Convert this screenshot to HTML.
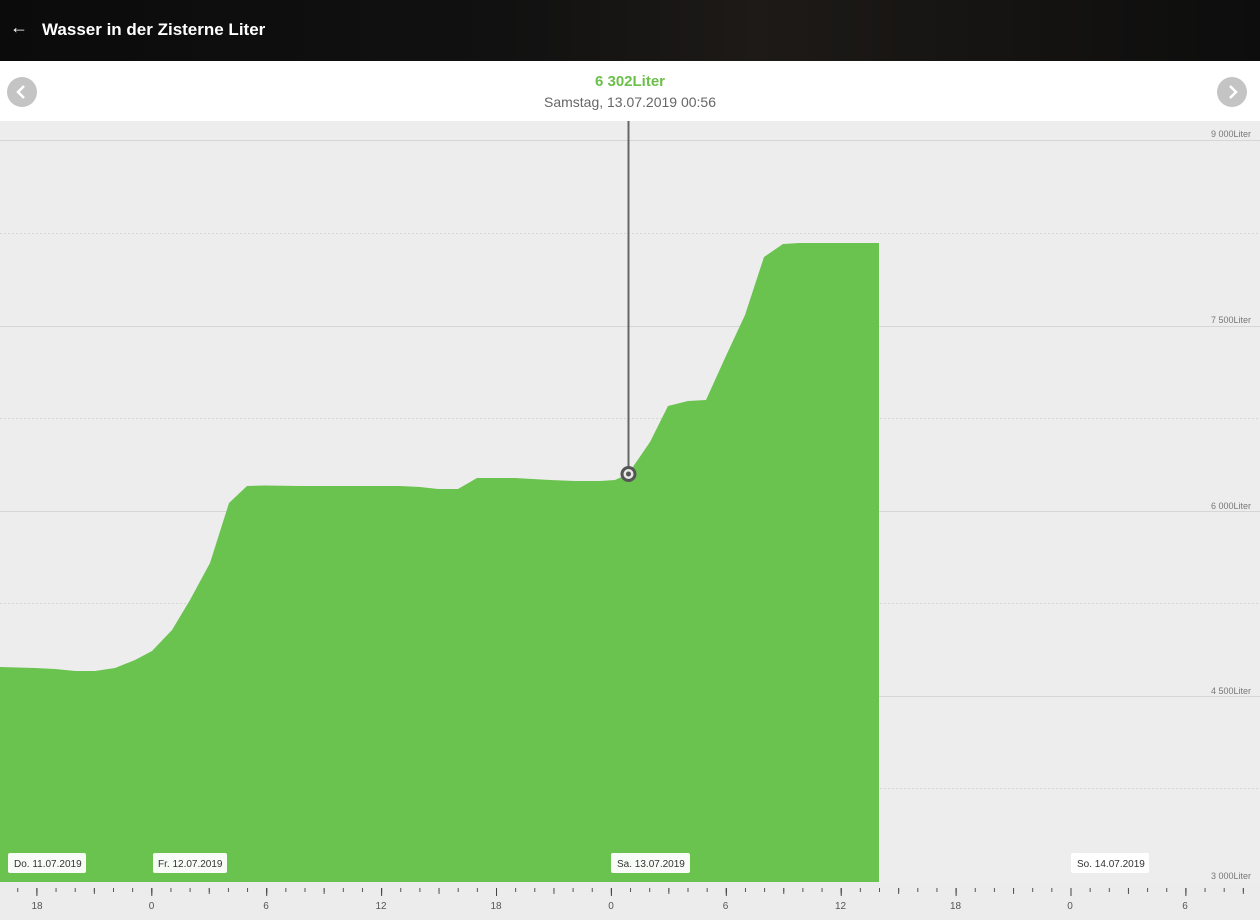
<!DOCTYPE html>
<html><head><meta charset="utf-8"><style>
html,body{margin:0;padding:0;width:1260px;height:920px;overflow:hidden;background:#ededed;font-family:"Liberation Sans",sans-serif}
.hdr{position:absolute;left:0;top:0;width:1260px;height:61px;background:linear-gradient(90deg,#0b0b0b 0%,#111 40%,#1d1a17 60%,#0d0d0d 100%)}
.hdr .t{position:absolute;left:42px;top:20px;color:#fff;font-weight:bold;font-size:17px}
.hdr .a{position:absolute;left:10px;top:17px;color:#fff;font-size:18px}
.top{position:absolute;left:0;top:61px;width:1260px;height:60px;background:#fff}
.btn{position:absolute;top:16px;width:30px;height:30px;border-radius:50%;background:#c4c4c4}
.v{position:absolute;left:0;width:1260px;text-align:center;top:12px;color:#6cc04a;font-weight:bold;font-size:15px}
.d{position:absolute;left:0;width:1260px;text-align:center;top:33px;color:#666;font-size:14px}
</style></head><body>
<div class="hdr"><div class="a">&#8592;</div><div class="t">Wasser in der Zisterne Liter</div></div>
<div class="top">
<div class="btn" style="left:7px"><svg width="30" height="30"><path d="M17 9 L11 15 L17 21" stroke="#fff" stroke-width="2.5" fill="none"/></svg></div>
<div class="btn" style="left:1217px"><svg width="30" height="30"><path d="M13 9 L19 15 L13 21" stroke="#fff" stroke-width="2.5" fill="none"/></svg></div>
<div class="v">6 302Liter</div>
<div class="d">Samstag, 13.07.2019 00:56</div>
</div>
<svg style="position:absolute;left:0;top:0" width="1260" height="920" font-family="Liberation Sans, sans-serif">
<defs>
<pattern id="p1" x="151.3" y="0" width="19.15" height="920" patternUnits="userSpaceOnUse"><rect x="0" y="888" width="1" height="4" fill="#555"/></pattern>
<pattern id="p3" x="151.3" y="0" width="57.45" height="920" patternUnits="userSpaceOnUse"><rect x="0" y="888" width="1" height="6" fill="#555"/></pattern>
<pattern id="p6" x="151.3" y="0" width="114.9" height="920" patternUnits="userSpaceOnUse"><rect x="0" y="888" width="1" height="8" fill="#444"/></pattern>
</defs>
<rect x="0" y="121" width="1260" height="761" fill="#ededed"/>
<g stroke="#d6d6d6" stroke-width="1">
<line x1="0" y1="140.5" x2="1260" y2="140.5"/><line x1="0" y1="326.5" x2="1260" y2="326.5"/><line x1="0" y1="511.5" x2="1260" y2="511.5"/><line x1="0" y1="696.5" x2="1260" y2="696.5"/>
</g>
<g stroke="#d6d6d6" stroke-width="1" stroke-dasharray="2,2">
<line x1="0" y1="233.5" x2="1260" y2="233.5"/><line x1="0" y1="418.5" x2="1260" y2="418.5"/><line x1="0" y1="603.5" x2="1260" y2="603.5"/><line x1="0" y1="788.5" x2="1260" y2="788.5"/>
</g>
<g font-size="9" fill="#777" text-anchor="end">
<text x="1251" y="137">9 000Liter</text><text x="1251" y="323">7 500Liter</text><text x="1251" y="509">6 000Liter</text><text x="1251" y="694">4 500Liter</text><text x="1251" y="879">3 000Liter</text>
</g>
<path d="M0 667 L35 668 L55 669 L75 671 L95 671 L115 668 L135 660 L152 651 L172 630 L190 600 L210 563 L229 503 L247 486 L265 485.5 L300 486 L400 486 L420 487 L438 489 L458 489 L477 478 L515 478 L550 480 L575 481 L600 481 L615 480 L628 474 L650 442 L668 406 L688 401 L706 400 L725 358 L745 315 L764 257 L783 244 L800 243 L879 243 L879 882 L0 882 Z" fill="#6ac24f"/>
<line x1="628.5" y1="121" x2="628.5" y2="466" stroke="#666" stroke-width="2"/>
<circle cx="628.5" cy="474" r="8" fill="#555"/><circle cx="628.5" cy="474" r="5" fill="#e8e8e8"/><circle cx="628.5" cy="474" r="2.5" fill="#555"/>
<g font-size="10" fill="#333">
<rect x="8" y="853" width="78" height="20" rx="2" fill="#fff" opacity="0.95"/><text x="14" y="867">Do. 11.07.2019</text>
<rect x="153" y="853" width="74" height="20" rx="2" fill="#fff" opacity="0.95"/><text x="158" y="867">Fr. 12.07.2019</text>
<rect x="611" y="853" width="79" height="20" rx="2" fill="#fff" opacity="0.95"/><text x="617" y="867">Sa. 13.07.2019</text>
<rect x="1071" y="853" width="78" height="20" rx="2" fill="#fff"/><text x="1077" y="867">So. 14.07.2019</text>
</g>
<rect x="0" y="882" width="1260" height="38" fill="#ececec"/>
<rect x="10" y="882" width="1240" height="38" fill="url(#p1)"/>
<rect x="10" y="882" width="1240" height="38" fill="url(#p3)"/>
<rect x="10" y="882" width="1240" height="38" fill="url(#p6)"/>
<g font-size="10" fill="#555" text-anchor="middle">
<text x="37" y="909">18</text><text x="151.5" y="909">0</text><text x="266" y="909">6</text><text x="381" y="909">12</text><text x="496" y="909">18</text><text x="611" y="909">0</text><text x="725.5" y="909">6</text><text x="840.5" y="909">12</text><text x="955.5" y="909">18</text><text x="1070" y="909">0</text><text x="1185" y="909">6</text>
</g>
</svg>
</body></html>
